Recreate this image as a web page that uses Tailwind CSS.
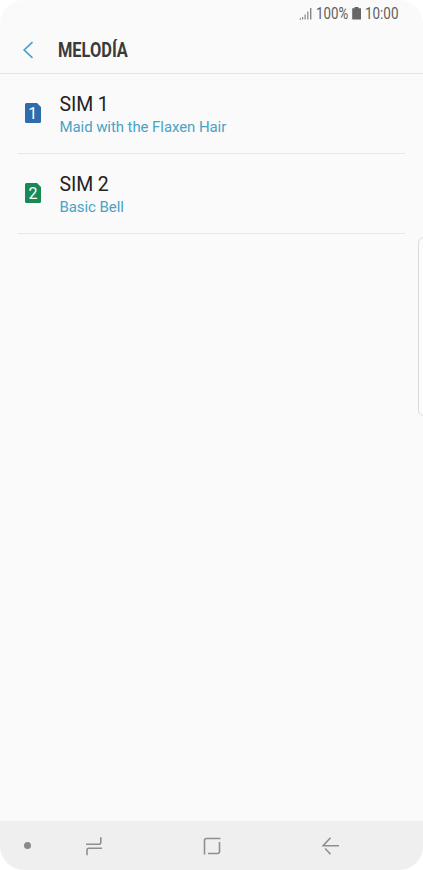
<!DOCTYPE html>
<html lang="es">
<head>
    <meta charset="UTF-8">
    <meta name="viewport" content="width=device-width, initial-scale=1.0">
    <title>Melodía</title>
    <script src="https://cdn.jsdelivr.net/npm/@tailwindcss/browser@4"></script>
</head>
<body class="bg-white font-['Roboto',sans-serif]">
    <div class="relative w-[423px] h-[870px] bg-[#fafafa] rounded-[24px] overflow-hidden flex flex-col">
        <!-- Status bar -->
        <div class="h-[27px] shrink-0 flex items-center pl-[299px] text-[16px] leading-[27px] text-[#5f5f5f]">
            <svg class="w-[13px] h-[13px] shrink-0 -mt-px" viewBox="0 0 13 13" fill="#858585">
                <path d="M0 12.500l2-2v2zM3 10h1.200v2.500H3zM5.500 7.500h1.200v5H5.500zM8.200 4.500h1.200v8H8.200zM11 1h1.400v11.500H11z"/>
            </svg>
            <div class="w-[36px] pl-[4px] shrink-0"><span class="inline-block origin-left scale-x-[0.83]">100%</span></div>
            <svg class="w-[17px] h-[13px] shrink-0 -mt-px" viewBox="0 0 17 13" fill="#666">
                <path d="M6.500 0h4v1.200H13v11.300H4.200V1.200h2.300z"/>
            </svg>
            <span class="inline-block origin-left scale-x-[0.84]">10:00</span>
        </div>

        <!-- Header -->
        <header class="h-[47px] shrink-0 flex items-center border-b border-[#e4e4e4]">
            <svg class="w-[12px] h-[18px] ml-[22px] -mt-px" viewBox="0 0 12 18" fill="none" stroke="#4aa3c7" stroke-width="1.700">
                <path d="M10.500 1.200L2.200 9l8.300 7.800"/>
            </svg>
            <h1 class="ml-[24px] origin-left scale-x-[0.82] text-[20px] font-bold text-[#3a3a3a]">MELODÍA</h1>
        </header>

        <!-- SIM list -->
        <main class="flex-1 pl-[18px] pr-[18px]">
            <div class="h-[80px] flex items-center border-b border-[#e8e8e8]">
                <svg class="w-[16px] h-[20px] ml-[7px] -mt-px" viewBox="0 0 16 20">
                    <path fill="#2f6cac" d="M1.500 0H12l4 4v14.500a1.500 1.500 0 0 1-1.500 1.500h-13A1.500 1.500 0 0 1 0 18.500v-17A1.500 1.500 0 0 1 1.500 0z"/>
                    <text x="7.700" y="16" text-anchor="middle" font-size="16" fill="#fff">1</text>
                </svg>
                <div class="ml-[18.500px] pt-[3px]">
                    <div class="text-[19.5px] leading-[25px] tracking-[-0.1px] text-[#222]">SIM 1</div>
                    <div class="text-[15px] leading-[21px] tracking-[-0.08px] text-[#4ba2c4]">Maid with the Flaxen Hair</div>
                </div>
            </div>
            <div class="h-[80px] flex items-center border-b border-[#e8e8e8]">
                <svg class="w-[16px] h-[20px] ml-[7px] -mt-px" viewBox="0 0 16 20">
                    <path fill="#158a57" d="M1.500 0H12l4 4v14.500a1.500 1.500 0 0 1-1.500 1.500h-13A1.500 1.500 0 0 1 0 18.500v-17A1.500 1.500 0 0 1 1.500 0z"/>
                    <text x="8" y="16" text-anchor="middle" font-size="16" fill="#fff">2</text>
                </svg>
                <div class="ml-[18.500px] pt-[3px]">
                    <div class="text-[19.5px] leading-[25px] tracking-[-0.1px] text-[#222]">SIM 2</div>
                    <div class="text-[15px] leading-[21px] tracking-[-0.08px] text-[#4ba2c4]">Basic Bell</div>
                </div>
            </div>
        </main>

        <!-- Edge panel handle -->
        <div class="absolute left-[418px] top-[237px] w-[12px] h-[179px] rounded-[6px] border border-[#dadada] bg-[#fcfcfc]"></div>

        <!-- Navigation bar -->
        <nav class="h-[49px] shrink-0 flex items-center bg-[#efefef]">
            <div class="w-[7px] h-[7px] ml-[24px] rounded-full bg-[#8a8a8a]"></div>
            <svg class="w-[18px] h-[20px] ml-[54px]" viewBox="0 0 18 20" fill="none" stroke="#8f8f8f" stroke-width="1.600">
                <path d="M1 8.300h12.800q2 0 2-2V1.300M17 12.300H4q-2 0-2 2v5"/>
            </svg>
            <svg class="w-[18px] h-[18px] ml-[100px]" viewBox="0 0 18 18" fill="none" stroke="#8f8f8f" stroke-width="1.600">
                <path d="M1.500 17.500V3.500q0-2 2-2h14M16.500 5v9.500q0 2-2 2H5"/>
            </svg>
            <svg class="w-[18px] h-[18px] ml-[101px]" viewBox="0 0 18 18" fill="none" stroke="#8f8f8f" stroke-width="1.600">
                <path d="M8.500 .800L1.200 8.700H17M3.200 11.500l5.300 5.700"/>
            </svg>
        </nav>
    </div>
</body>
</html>
